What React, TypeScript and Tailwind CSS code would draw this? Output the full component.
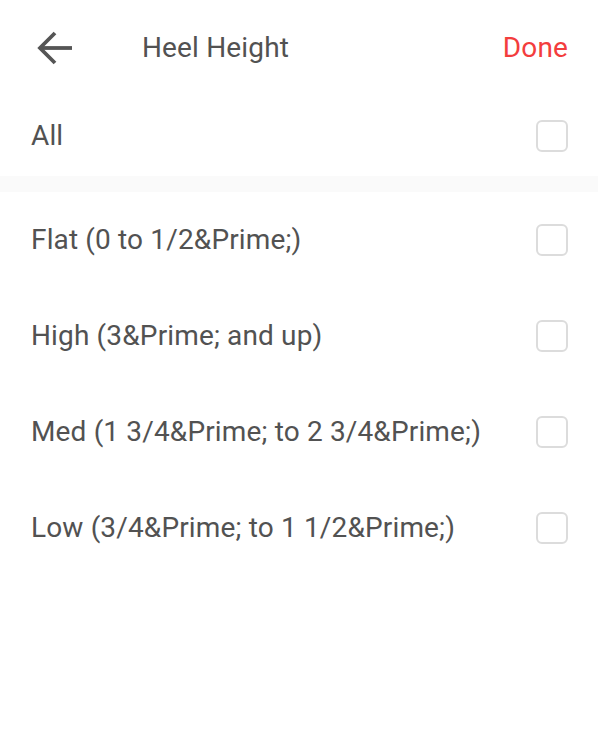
import React from 'react'

const options = [
  'Flat (0 to 1/2&Prime;)',
  'High (3&Prime; and up)',
  'Med (1 3/4&Prime; to 2 3/4&Prime;)',
  'Low (3/4&Prime; to 1 1/2&Prime;)',
]

const Checkbox = () => (
  <span className="block w-[32px] h-[32px] rounded-[6px] border-2 border-[#dcdcdc] bg-white" />
)

const App = () => {
  return (
    <div className="w-[598px] h-[730px] bg-white text-[#525252] text-[28px] tracking-[0.15px]" style={{ fontFamily: 'Roboto, sans-serif' }}>
      {/* Header */}
      <div className="h-[96px] flex items-center pl-[37px] pr-[30px]">
        <svg width="36" height="34" viewBox="0 0 36 34" fill="none" stroke="#555" strokeWidth="3.8">
          <path d="M3 17H35" />
          <path d="M18 2L3 17L18 32" />
        </svg>
        <h1 className="ml-[69px] font-normal leading-none">Heel Height</h1>
        <button className="ml-auto text-[#f33d3d] leading-none">Done</button>
      </div>

      {/* All */}
      <div className="h-[80px] flex items-center justify-between pl-[31px] pr-[30px]">
        <span className="leading-none">All</span>
        <Checkbox />
      </div>

      <div className="h-[16px] bg-[#fafafa]" />

      {/* Options */}
      {options.map((label) => (
        <div key={label} className="h-[96px] flex items-center justify-between pl-[31px] pr-[30px]">
          <span className="leading-none">{label}</span>
          <Checkbox />
        </div>
      ))}
    </div>
  )
}

export default App
